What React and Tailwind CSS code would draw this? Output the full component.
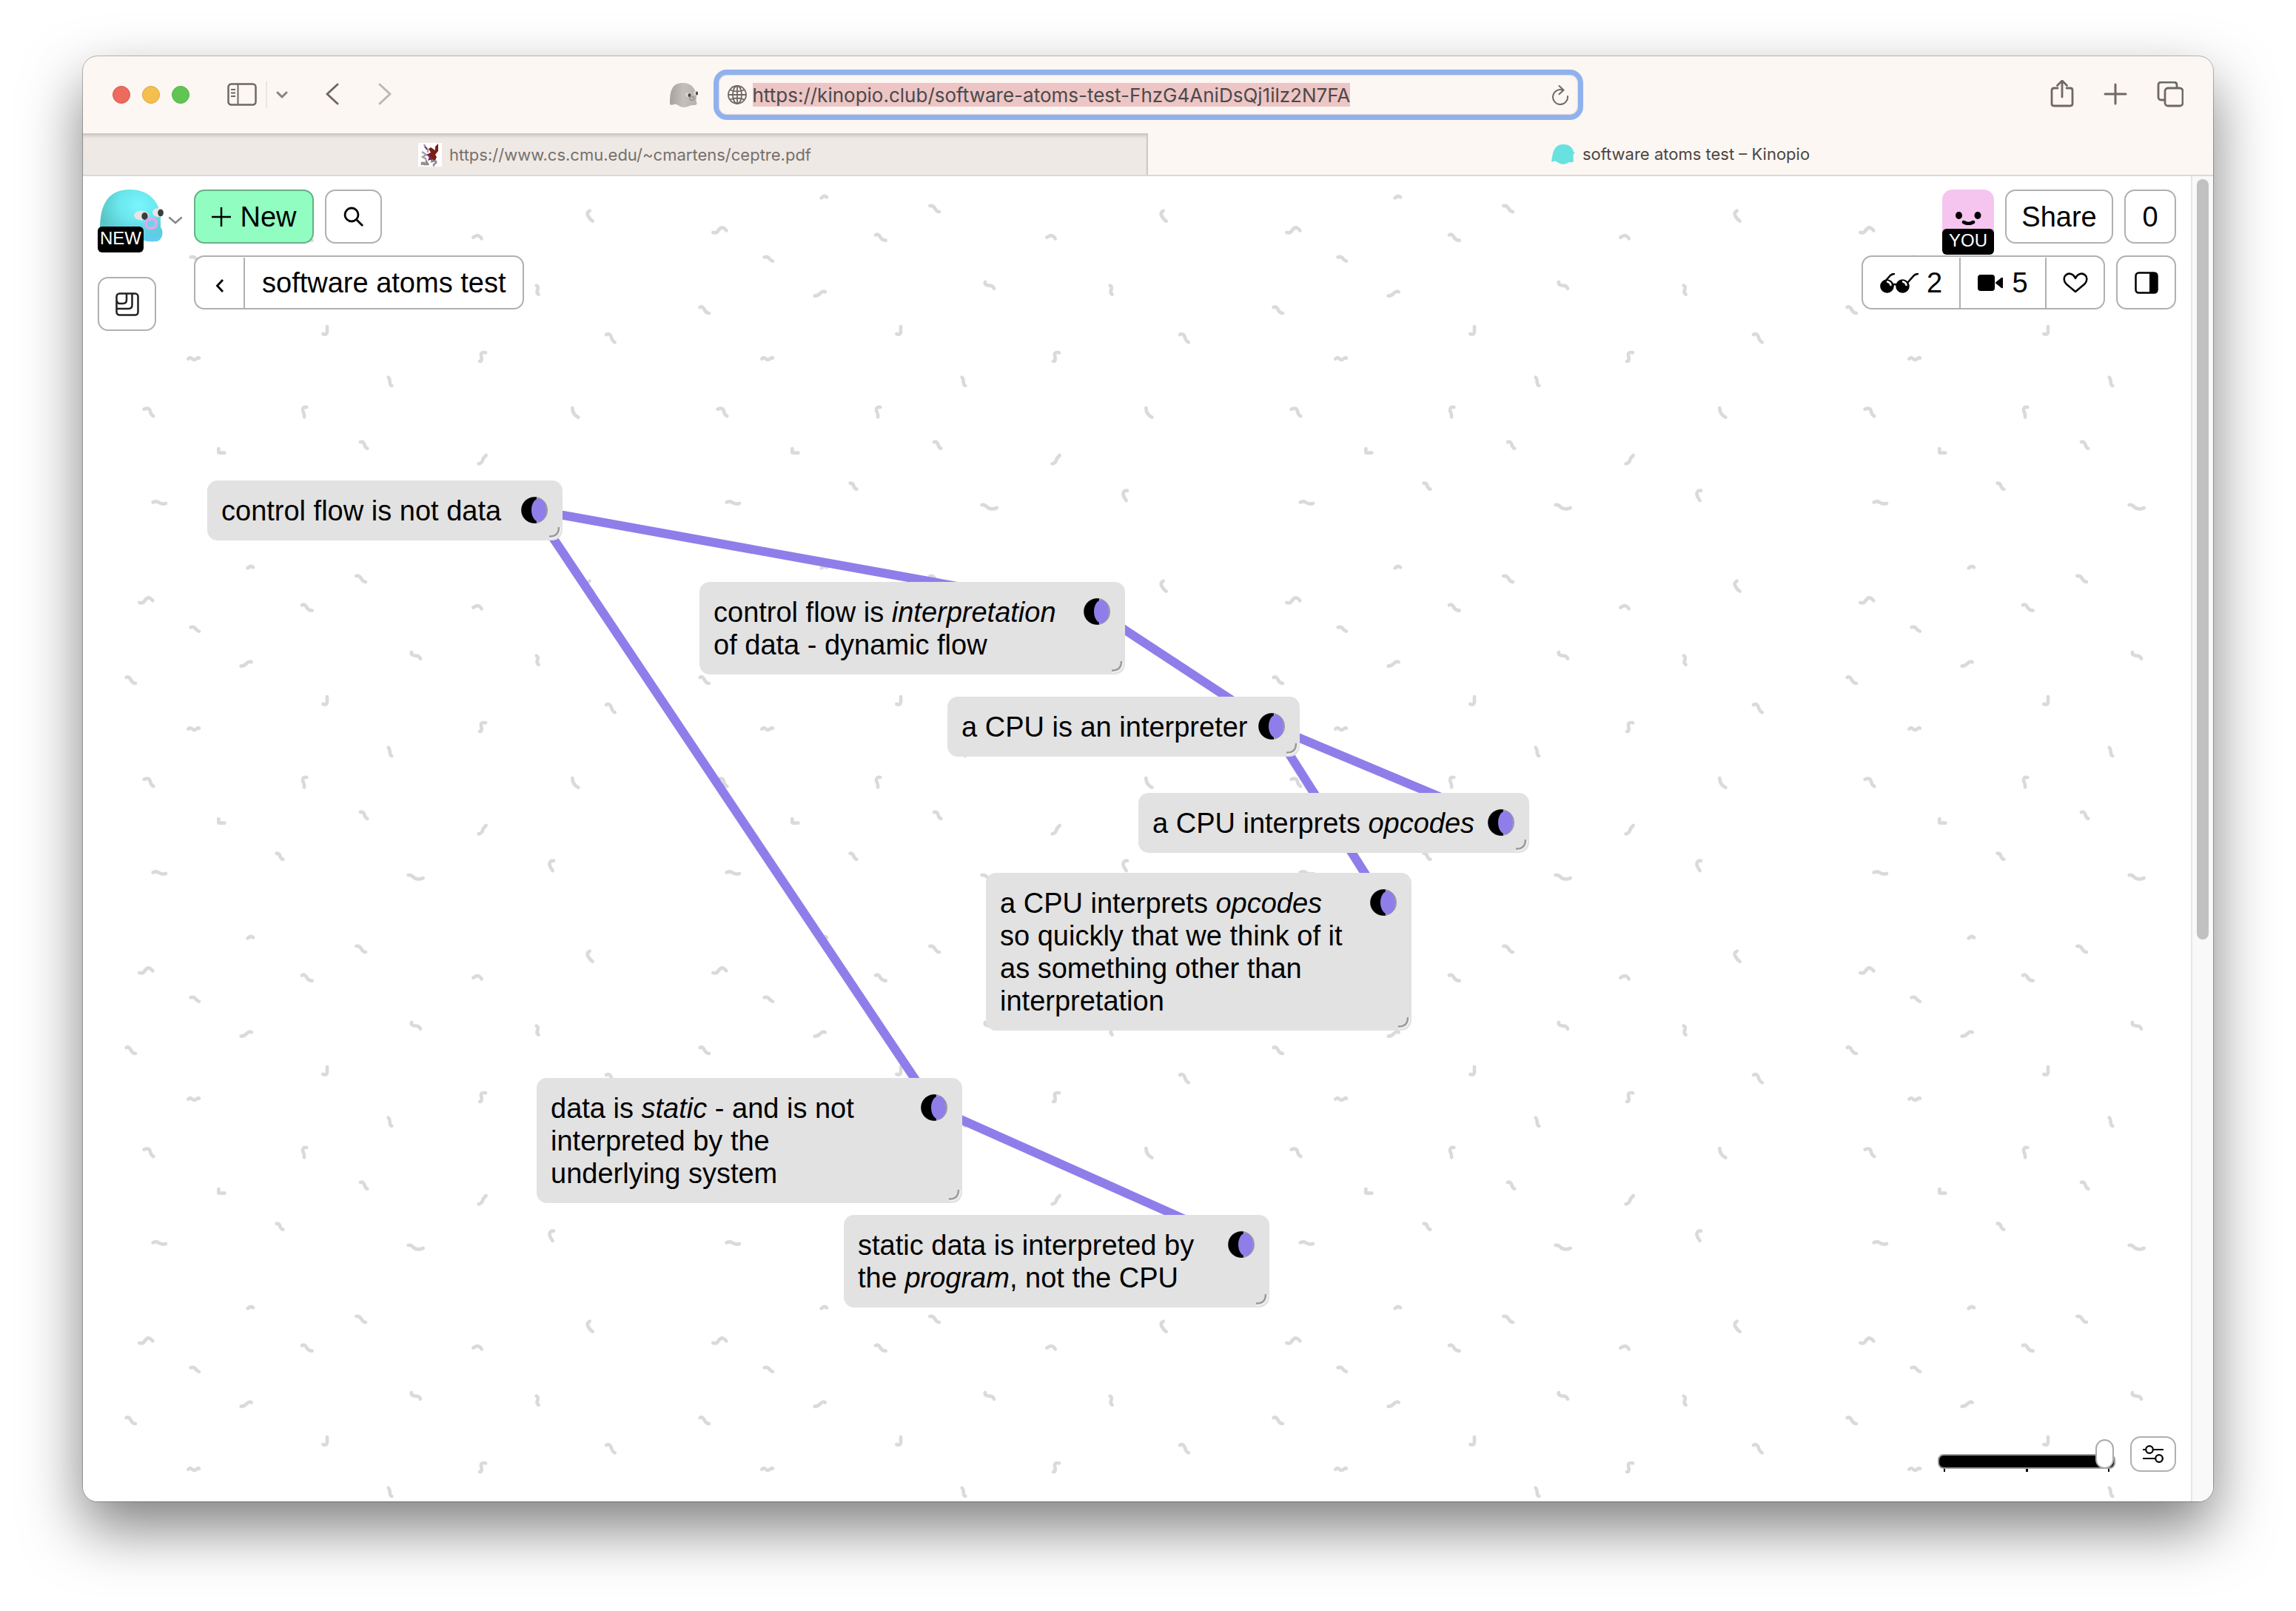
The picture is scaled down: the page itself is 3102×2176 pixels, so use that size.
import React from "react";

const LINK = "#8f7ee9";

const cards = [
  { id: "control", x: 168, y: 411, w: 480, lines: ["control flow is not data"] },
  { id: "dynamic", x: 833, y: 548, w: 575, lines: [<>control flow is <i>interpretation</i></>, "of data - dynamic flow"] },
  { id: "cpu", x: 1168, y: 703, w: 476, lines: ["a CPU is an interpreter"] },
  { id: "opcodes", x: 1426, y: 833, w: 528, lines: [<>a CPU interprets <i>opcodes</i></>] },
  {
    id: "quick",
    x: 1220,
    y: 941,
    w: 575,
    lines: [<>a CPU interprets <i>opcodes</i></>, "so quickly that we think of it", "as something other than", "interpretation"],
  },
  {
    id: "static",
    x: 613,
    y: 1218,
    w: 575,
    lines: [<>data is <i>static</i> - and is not</>, "interpreted by the", "underlying system"],
  },
  { id: "program", x: 1028, y: 1403, w: 575, lines: ["static data is interpreted by", <>the <i>program</i>, not the CPU</>] },
];

const links = [
  ["control", "dynamic"],
  ["control", "static"],
  ["dynamic", "cpu"],
  ["cpu", "opcodes"],
  ["cpu", "quick"],
  ["static", "program"],
];

/* Squiggles of one background tile, drawn at three times their size. */
const squiggles = [
  "M178 422q14-10 22-7q8 3 12 12",
  "M650 314q-14 8-6 22q8 14 18 20",
  "M1150 402q14 4 20-6q8-14 18-14q8 2 16 12",
  "M434 617q10 4 5 16q-6 14 4 20",
  "M1097 705q10-6 17 8q8 16 20 16",
  "M717 816q12-8 19 6q6 22 16 25",
  "M228 889q-20-4-18 10q6 26-6 25",
  "M580 1113q0 26 24 38",
  "M1169 1118q20-8 24 6q4 18 14 22",
  "M230 1305q-8 8-12 14q-4 18-18 20",
  "M504 1448q-16-2-17 14q2 12 13 26",
  "M1205 1495q14-6 22 0q14 10 30 5",
  "M1589 262q12-12 22-3",
  "M2029 294q14-2 20 10q8 14 18 14",
  "M1809 412q12-6 17 6q8 16 24 16",
  "M1358 502q14-4 20 6q6 8 14 10",
  "M2253 603q-4 12 16 14q16 0 20 12",
  "M1562 659q14 0 22-10q10-12 20-6",
  "M1911 783v22q-2 14-17 8",
  "M1348 914q8-10 16 0q8 8 18-1q6-6 10-2",
  "M2159 989q6 6 6 16q0 16 8 18",
  "M1828 1110q-18-2-16 14q8 18 6 26",
  "M1471 1278v14q0 3 4 3h20",
  "M2046 1251q12-4 16 10q4 14 12 16",
  "M1706 1418q12 0 14 12q6 12 12 12",
  "M2240 1506q12-2 20 8q16 14 40 4",
];

const moonOf = (id) => {
  const c = cards.find((k) => k.id === id);
  return { x: c.x + c.w - 38, y: c.y + 40 };
};

function Board() {
  return (
    <>
      <svg className="absolute inset-0 h-full w-full" aria-hidden="true">
        <defs>
          <pattern id="squiggles" x="-307" y="-18" width="775" height="500" patternUnits="userSpaceOnUse">
            <g transform="scale(.33333) translate(0 -120)" fill="none" stroke="#dadada" strokeWidth="14" strokeLinejoin="round" strokeLinecap="round">
              {squiggles.map((d) => (
                <path key={d} d={d} />
              ))}
            </g>
          </pattern>
        </defs>
        <rect width="100%" height="100%" fill="url(#squiggles)" />
        {links.map(([a, b]) => {
          const p = moonOf(a);
          const q = moonOf(b);
          return <line key={a + b} x1={p.x} y1={p.y} x2={q.x} y2={q.y} stroke={LINK} strokeWidth="12" />;
        })}
      </svg>
      {cards.map((c) => (
        <article
          key={c.id}
          className="absolute rounded-[14px] bg-[#e2e2e2] pt-[19px] pr-5 pb-[18px] pl-[19px] text-[38px] leading-[44px]"
          style={{ left: c.x, top: c.y, width: c.w }}
        >
          <div className="flex items-start justify-between">
            <p className="whitespace-nowrap">
              {c.lines.map((l, i) => (
                <span key={i} className="block">
                  {l}
                </span>
              ))}
            </p>
            <button type="button" aria-label="Connect card" className="mt-[3px] shrink-0">
              <svg className="block size-9" viewBox="0 0 36 36">
                <circle cx="18" cy="18" r="17" fill="#e2e2e2" stroke="#999" strokeWidth="2" />
                <path d="M21 .5A17.750 17.750 0 1 0 21 35.500Z" fill="#000" />
                <ellipse cx="24" cy="18" rx="10" ry="15.500" fill={LINK} />
              </svg>
            </button>
          </div>
          <svg className="absolute right-[2px] bottom-[2px] size-4" viewBox="0 0 16 16" fill="none" aria-hidden="true">
            <path d="M0 12.500Q13 13 13 0" stroke="#999" strokeWidth="2.500" />
            <path d="M0 15Q15.500 15 15.500 0" stroke="#f2f2f2" strokeWidth="1.500" />
          </svg>
        </article>
      ))}
    </>
  );
}

const box = "flex h-[73px] items-center justify-center rounded-[14px] border-2 border-[#b0b0b0] bg-white pt-px text-[38px] leading-none";

function Toolbar() {
  return (
    <div className="flex h-[104px] shrink-0 items-center px-10 text-[#6f6863]">
      <div className="flex flex-1 items-center">
        <div className="flex gap-4">
          <button type="button" aria-label="Close" className="size-6 rounded-full border border-[#d9574d] bg-[#ec6a5e]" />
          <button type="button" aria-label="Minimise" className="size-6 rounded-full border border-[#dba640] bg-[#f4bf4f]" />
          <button type="button" aria-label="Zoom" className="size-6 rounded-full border border-[#52b143] bg-[#61c554]" />
        </div>
        <button type="button" aria-label="Sidebar" className="ml-[51px]">
          <svg className="block h-8 w-10" viewBox="0 0 40 32" fill="none" stroke="currentColor" strokeWidth="2.500">
            <rect x="1.500" y="1.500" width="37" height="28" rx="4" />
            <path d="M14.500 2v28" strokeWidth="2" />
            <path d="M5 9h6M5 13.500h6M5 18h6" strokeWidth="1.800" />
          </svg>
        </button>
        <span className="ml-3 h-9 w-[2px] bg-[#ece6e2]" />
        <button type="button" aria-label="Tab groups" className="ml-3">
          <svg className="block h-4 w-4" viewBox="0 0 16 16" fill="none" stroke="#89827d" strokeWidth="3" strokeLinecap="round" strokeLinejoin="round">
            <path d="M2 5l6 6 6-6" />
          </svg>
        </button>
        <button type="button" aria-label="Back" className="ml-[50px]">
          <svg className="block h-8 w-5" viewBox="0 0 20 32" fill="none" stroke="currentColor" strokeWidth="3" strokeLinecap="round" strokeLinejoin="round">
            <path d="M17 2L3 15l14 13" />
          </svg>
        </button>
        <button type="button" aria-label="Forward" className="ml-[51px] text-[#bdb7b3]">
          <svg className="block h-8 w-5" viewBox="0 0 20 32" fill="none" stroke="currentColor" strokeWidth="3" strokeLinecap="round" strokeLinejoin="round">
            <path d="M3 2l14 13L3 28" />
          </svg>
        </button>
        <svg className="mr-5 ml-auto block h-9 w-10" viewBox="0 0 40 36" aria-hidden="true">
          <defs>
            <linearGradient id="greyGhost">
              <stop offset="0" stopColor="#a5a29f" />
              <stop offset=".5" stopColor="#c2bfbc" />
              <stop offset="1" stopColor="#b5b2af" />
            </linearGradient>
          </defs>
          <path d="M1 30C1 12 4 2 19 2c11 0 17 8 18 17 0 5-1 6 0 9 2 4-2 4-5 4-5 0-6 3-12 3-7 0-8-5-13-4-4 1-6 1-6-1z" fill="url(#greyGhost)" />
          <ellipse cx="26" cy="18" rx="4" ry="3" fill="#d8d6d4" />
          <ellipse cx="36" cy="16" rx="3" ry="3" fill="#d8d6d4" />
          <ellipse cx="27.500" cy="18.500" rx="2" ry="2.500" fill="#444" />
          <ellipse cx="37.500" cy="16" rx="1.500" ry="2.500" fill="#444" />
          <ellipse cx="31" cy="23" rx="3" ry="2.500" fill="none" stroke="#999693" strokeWidth="1.500" />
        </svg>
      </div>
      <div className="flex h-[68px] w-[1175px] items-center rounded-[18px] border-[7px] border-[#8fb1ee] bg-[#fcf7f3] px-3 shadow-[inset_0_0_2px_#a09a95]">
        <svg className="block size-[26px] shrink-0" viewBox="0 0 26 26" fill="none" stroke="currentColor" strokeWidth="1.800" aria-hidden="true">
          <circle cx="13" cy="13" r="12" />
          <ellipse cx="13" cy="13" rx="6" ry="12" />
          <path d="M1 13h24M13 1v24M3.500 6.500q9.500 4 19 0M3.500 19.500q9.500-4 19 0" />
        </svg>
        <input
          aria-label="Address"
          readOnly
          className="ml-2 field-sizing-content h-8 bg-[#edc5c5] pt-px font-[Inter] text-[26px] leading-8 text-[#4a4a4a] outline-none"
          defaultValue="https://kinopio.club/software-atoms-test-FhzG4AniDsQj1ilz2N7FA"
        />
        <button type="button" aria-label="Reload" className="ml-auto">
          <svg className="block h-7 w-6" viewBox="0 0 24 28" fill="none" stroke="currentColor" strokeWidth="2" strokeLinecap="round">
            <path d="M15 7.500A10 10 0 1 0 22 16" />
            <path d="M10.500 2l6 5.800-6 5.500" />
          </svg>
        </button>
      </div>
      <div className="flex flex-1 items-center justify-end gap-10">
        <button type="button" aria-label="Share page">
          <svg className="block h-10 w-8" viewBox="0 0 32 40" fill="none" stroke="currentColor" strokeWidth="2.800" strokeLinecap="round" strokeLinejoin="round">
            <path d="M10 11H5q-3 0-3 3v18q0 3 3 3h22q3 0 3-3V14q0-3-3-3h-5M16 23V2M9.500 7.500L16 1l6.500 6.500" />
          </svg>
        </button>
        <button type="button" aria-label="New tab">
          <svg className="block size-8" viewBox="0 0 32 32" fill="none" stroke="currentColor" strokeWidth="3" strokeLinecap="round">
            <path d="M16 2v26M2 15h28" />
          </svg>
        </button>
        <button type="button" aria-label="Tab overview">
          <svg className="block h-9 w-9" viewBox="0 0 36 36" fill="none" stroke="currentColor" strokeWidth="2.800" strokeLinejoin="round">
            <rect x="11" y="9" width="24" height="24" rx="4" />
            <path d="M10 25H6q-4 0-4-4V5q0-4 4-4h17q4 0 4 4v4" />
          </svg>
        </button>
      </div>
    </div>
  );
}

function Tabs() {
  return (
    <nav className="grid h-[58px] shrink-0 grid-cols-2 border-b-2 border-[#d9d9d9] font-[Inter] text-[22px] leading-none">
      <a
        href="#pdf"
        className="flex items-center justify-center gap-[10px] border-t-2 border-r-2 border-[#cfc9c5] bg-[#eee9e5] text-[#77706c] shadow-[inset_0_4px_5px_-3px_#c5bfbb]"
      >
        <svg className="block size-8" viewBox="0 0 32 32" aria-hidden="true">
          <rect width="32" height="32" fill="#fff" />
          <path d="M8 2l2 4 3 3v4M5 12l6 4-5 3 5 3" fill="none" stroke="#a6a0a8" strokeWidth="2.500" />
          <path d="M27 1l-4 4v5l-6-4-3 2 3 5-6 3 4 3-2 5 6-2 3 4 3-7-2-3 4-5z" fill="#7a1e18" />
          <path d="M9 5l3 4M13 16l3 4 3 4" stroke="#75308a" strokeWidth="2" fill="none" />
          <path d="M5 30v-3h3v2h3v-4l3 5M17 26q8-4 7 1-5 3-2 4" fill="none" stroke="#8d8a8d" strokeWidth="2.500" />
        </svg>
        https://www.cs.cmu.edu/~cmartens/ceptre.pdf
      </a>
      <a href="#space" className="flex items-center justify-center gap-[10px] text-[#4b4643]">
        <svg className="block h-7 w-8" viewBox="0 0 32 28" aria-hidden="true">
          <path d="M0 23C2 20 0 1 16 1c9 0 13 5 14 10q3 2 0 3c-1 4 0 6 0 10q-1 2-6 1-4 3-8 3t-8-3-7 0z" fill="#68e2e1" />
        </svg>
        software atoms test – Kinopio
      </a>
    </nav>
  );
}

function LeftControls() {
  return (
    <div className="flex">
      <div className="w-[130px]">
        <button type="button" aria-label="Kinopio menu" className="relative flex h-[85px] w-full items-start">
          <svg className="ml-[2px] block h-[72px] w-[88px]" viewBox="0 0 88 72">
            <defs>
              <radialGradient id="ghost" cx=".62" cy=".3" r=".65">
                <stop offset="0" stopColor="#78f6ff" />
                <stop offset=".5" stopColor="#6ae6ec" />
                <stop offset="1" stopColor="#57c2c4" />
              </radialGradient>
              <linearGradient id="foot" x1="0" y1="0" x2="0" y2="1">
                <stop offset=".6" stopColor="#64d9f5" stopOpacity="0" />
                <stop offset="1" stopColor="#62cdf5" />
              </linearGradient>
            </defs>
            <path d="M1 62C0 25 8 0 42 0c26 0 38 17 41 34v17c5 6 2 19-7 19-14 1-22-4-34-4-14 0-22 4-34 2-5-1-7-2-7-6z" fill="url(#ghost)" />
            <path d="M1 62C0 25 8 0 42 0c26 0 38 17 41 34v17c5 6 2 19-7 19-14 1-22-4-34-4-14 0-22 4-34 2-5-1-7-2-7-6z" fill="url(#foot)" />
            <ellipse cx="57" cy="35" rx="10" ry="6.500" fill="#e9e4e4" />
            <ellipse cx="80" cy="31" rx="8" ry="6" fill="#e9e4e4" />
            <ellipse cx="61.500" cy="36" rx="4.200" ry="5" fill="#3c3c40" />
            <ellipse cx="83" cy="31.500" rx="3.800" ry="4.800" fill="#3c3c40" />
            <rect x="63" y="40" width="14" height="12" rx="5" fill="#68d5ea" stroke="#eaa4ea" strokeWidth="3.500" transform="rotate(-8 70 46)" />
          </svg>
          <svg className="mt-9 ml-[5px] block h-3 w-5" viewBox="0 0 20 12" fill="none" stroke="#888" strokeWidth="2.500" strokeLinecap="round">
            <path d="M2 2l8 7 8-7" />
          </svg>
          <span className="absolute bottom-0 left-0 h-[35px] w-[62px] rounded-[6px] bg-black text-center text-[24px] leading-[31px] text-white">NEW</span>
        </button>
        <button type="button" aria-label="Minimap" className={`${box} mt-[33px] w-[79px]`}>
          <svg className="block size-8" viewBox="0 0 32 32" fill="none" stroke="#222" strokeWidth="2.500">
            <rect x="1.500" y="1.500" width="29" height="29" rx="4" />
            <path d="M22.500 2v15q0 5-5 5H2M15 2v8q0 5-5 5H6q-4 0-4-4" />
          </svg>
        </button>
      </div>
      <div className="flex flex-col items-start gap-4">
        <div className="flex gap-[15px]">
          <button
            type="button"
            className="flex h-[73px] w-[162px] items-center justify-center gap-[11px] rounded-[14px] border-2 border-[#66b087] bg-[#91fdc0] pt-px text-[38px] leading-none"
          >
            <svg className="block size-7" viewBox="0 0 28 28" stroke="#000" strokeWidth="2.500" fill="none" aria-hidden="true">
              <path d="M14 1v26M1 14h26" />
            </svg>
            New
          </button>
          <button type="button" aria-label="Search" className={`${box} w-[77px]`}>
            <svg className="block size-7" viewBox="0 0 28 28" stroke="#000" strokeWidth="2.800" fill="none">
              <circle cx="11" cy="11" r="9" />
              <path d="M17 17l9 9" />
            </svg>
          </button>
        </div>
        <div className={box}>
          <button type="button" aria-label="Back to spaces" className="flex h-full w-[67px] items-center justify-center border-r-2 border-[#b0b0b0]">
            <svg className="mt-2 block h-5 w-3" viewBox="0 0 12 20" fill="none" stroke="#000" strokeWidth="2.800">
              <path d="M10 2L2.500 10l7.500 8" />
            </svg>
          </button>
          <button type="button" className="h-full px-[23px]">
            software atoms test
          </button>
        </div>
      </div>
    </div>
  );
}

function RightControls() {
  return (
    <div className="flex flex-col items-end gap-4">
      <div className="flex gap-[15px]">
        <button type="button" aria-label="Your profile" className="relative h-[73px] w-[70px] rounded-t-[14px] bg-[#f5c5ef]">
          <svg className="absolute top-7 left-4 h-5 w-10" viewBox="0 0 40 20" aria-hidden="true">
            <ellipse cx="6.500" cy="7" rx="4.500" ry="5" />
            <ellipse cx="32" cy="7" rx="4.500" ry="5" />
            <path d="M13 16q6.500 4 13 0" stroke="#000" strokeWidth="4.500" strokeLinecap="round" fill="none" />
          </svg>
          <span className="absolute top-[53px] left-0 h-[35px] w-full rounded-[6px] bg-black text-center text-[24px] leading-[31px] text-white">YOU</span>
        </button>
        <button type="button" className={`${box} w-[146px]`}>
          Share
        </button>
        <button type="button" className={`${box} w-[70px]`}>
          0
        </button>
      </div>
      <div className="flex gap-[15px]">
        <div className={box}>
          <button type="button" aria-label="Readers: 2" className="flex h-full w-[132px] items-center justify-center gap-[10px] border-r-2 border-[#b0b0b0]">
            <svg className="block h-[27px] w-[53px]" viewBox="0 0 53 27">
              <circle cx="9.500" cy="17.500" r="9.300" />
              <circle cx="30.500" cy="17.500" r="9.300" />
              <path d="M17 16q3-2 6 0M6 12L14 3q3-2.500 6-2M37 13L46 3q3-2.500 6-2" fill="none" stroke="#000" strokeWidth="2.500" />
              <path d="M10 11.500q4 1 4.500 4.500M31 11.500q4 1 4.500 4.500" fill="none" stroke="#fff" strokeWidth="2.500" strokeLinecap="round" />
            </svg>
            2
          </button>
          <button type="button" aria-label="Video: 5" className="flex h-full w-[116px] items-center justify-center gap-3 border-r-2 border-[#b0b0b0]">
            <svg className="block h-6 w-[34px]" viewBox="0 0 34 24">
              <rect y="1" width="23" height="22" rx="4" />
              <path d="M24 11.500L32 5q2-1 2 1v12q0 2-2 1l-8-6.500z" />
            </svg>
            5
          </button>
          <button type="button" aria-label="Favourite" className="flex h-full w-[77px] items-center justify-center">
            <svg className="block h-7 w-[34px]" viewBox="0 0 34 28" fill="none" stroke="#000" strokeWidth="2.500" strokeLinejoin="round">
              <path d="M17 26L4.500 15.500C.5 11 1 6 4 3.500 8 0 14 1.500 17 8c3-6.500 9-8 13-4.500 3 2.500 3.500 7.500-.5 12z" />
            </svg>
          </button>
        </div>
        <button type="button" aria-label="Toggle sidebar" className={`${box} w-[81px]`}>
          <svg className="block h-[30px] w-8" viewBox="0 0 32 30">
            <rect x="1.500" y="1.500" width="29" height="27" rx="4" fill="none" stroke="#000" strokeWidth="2.500" />
            <path d="M20 1h7q4 0 4 4v20q0 4-4 4h-7z" />
          </svg>
        </button>
      </div>
    </div>
  );
}

function Footer() {
  return (
    <div className="mt-auto flex items-end gap-5 self-end">
      <div>
        <input
          type="range"
          aria-label="Canvas zoom"
          defaultValue="100"
          className="block h-5 w-60 appearance-none rounded-[8px] border-2 border-[#999] bg-black [&::-webkit-slider-thumb]:-mt-5 [&::-webkit-slider-thumb]:h-10 [&::-webkit-slider-thumb]:w-[25px] [&::-webkit-slider-thumb]:appearance-none [&::-webkit-slider-thumb]:rounded-full [&::-webkit-slider-thumb]:border-2 [&::-webkit-slider-thumb]:border-[#aaa] [&::-webkit-slider-thumb]:bg-white"
        />
        <div className="flex justify-between px-2">
          <span className="h-1 w-[2px] bg-black" />
          <span className="h-1 w-[3px] bg-black" />
          <span className="h-1 w-[2px] bg-black" />
        </div>
      </div>
      <button type="button" aria-label="Settings" className="flex h-12 w-[62px] items-center justify-center rounded-[14px] border-2 border-[#b0b0b0] bg-white">
        <svg className="block h-6 w-7" viewBox="0 0 28 24" fill="#fff" stroke="#000" strokeWidth="2.200">
          <path d="M0 6h28M0 18h28" />
          <circle cx="9" cy="6" r="4.800" />
          <circle cx="22" cy="18" r="4.800" />
        </svg>
      </button>
    </div>
  );
}

export default function App() {
  return (
    <div className="flex h-screen flex-col overflow-hidden bg-white px-28 pt-[76px] pb-[148px] font-['Liberation_Sans',Arial,sans-serif] text-black">
      <div className="flex min-h-0 flex-1 flex-col overflow-hidden rounded-[20px] bg-[#fcf7f3] shadow-[0_0_0_1px_rgba(0,0,0,0.25),0_36px_80px_rgba(0,0,0,0.5)]">
        <Toolbar />
        <Tabs />
        <div className="flex min-h-0 flex-1 bg-white">
          <main className="relative min-w-0 flex-1 overflow-hidden">
            <Board />
            <div className="relative flex h-full flex-col px-5 pt-[18px] pb-10">
              <div className="flex items-start justify-between">
                <LeftControls />
                <RightControls />
              </div>
              <Footer />
            </div>
          </main>
          <div className="w-[30px] border-l-2 border-[#e6e6e6] bg-[#f9f9f9] px-[6px] pt-1">
            <div className="h-[57.5%] rounded-full bg-[#c1c1c1]" />
          </div>
        </div>
      </div>
    </div>
  );
}
